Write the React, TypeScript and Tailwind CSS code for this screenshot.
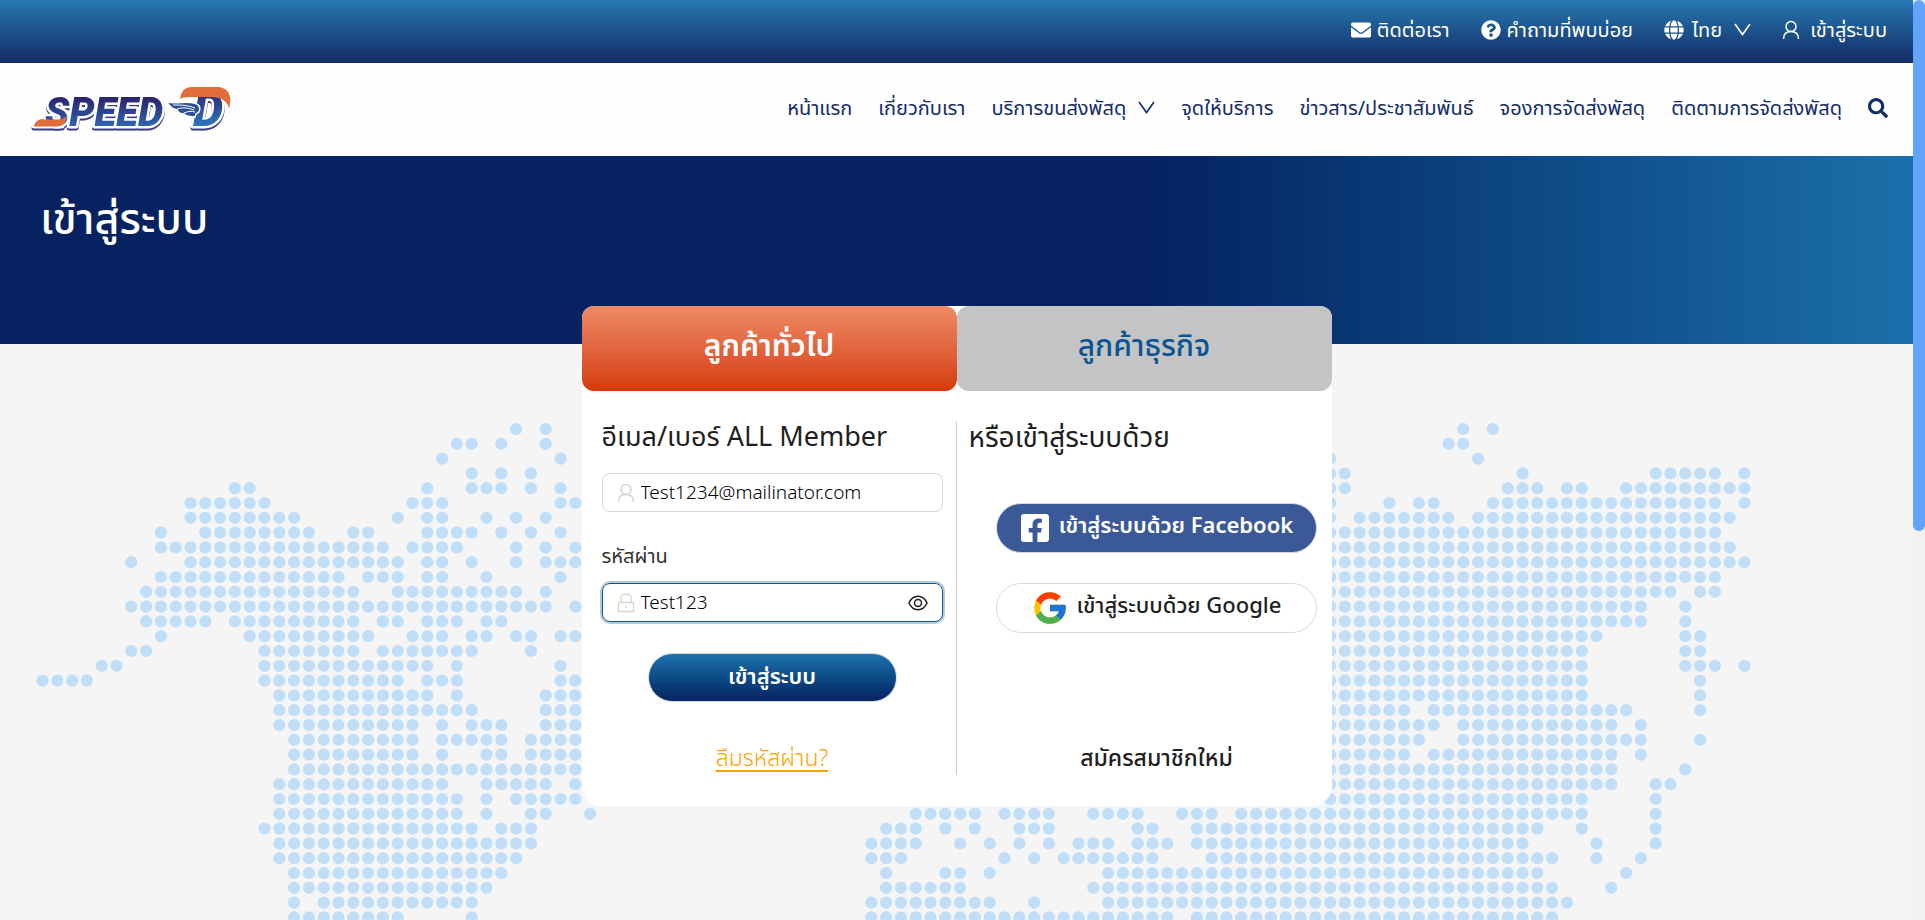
import { useState, type ReactNode } from "react";
import { FaEnvelope, FaFacebookSquare, FaGlobe, FaQuestionCircle, FaSearch } from "react-icons/fa";
import { FcGoogle } from "react-icons/fc";

// Each string is one row of the dotted world map: dot columns, single or as ranges.
const MAP_ROWS = [
  "32 34 96 98",
  "28 29 31 34 95 96",
  "27 35 87 97",
  "29 31 33 87-88 100 109-113 115",
  "13-14 26 29-31 33 35 87-88 99-101 103-104 107-115",
  "10-15 25-27 35-36 87 91 93-94 98-113 115",
  "10-17 24 26-27 30 32 34 87 89-95 97-114",
  "8 11-18 21-22 26-29 31 33 35 87-113",
  "8-23 25-28 32 34 36 87-114",
  "6 10-24 26-27 29 32 34-36 87-115",
  "8-20 22-24 26-27 30 35 87-113",
  "7-21 24-32 34 87-110 112-113",
  "6-34 36 87-108 111",
  "7-11 13-21 23-24 26-28 30-31 87-108 111",
  "8 14-22 25-27 29-30 32-33 35-36 87-105 111-112",
  "6-7 15-21 23-29 33 87-104 111-112",
  "4-5 15-26 28 35 87-104 111-113 115",
  "0-3 15-24 26-28 35-36 87-104 112",
  "16-26 28 34-36 87-104 112",
  "16-29 34-36 87-92 94-107 112",
  "16-25 27 29-31 34-36 87-94 96-106 108",
  "17-25 27-31 33-36 87-93 96-108 112",
  "17-25 27 30-31 33-36 87-92 94-106 108",
  "17-36 87-106 111",
  "16-27 30-34 36 87-106 109-110",
  "16-28 30 32-36 87-104 109",
  "16-28 30 33-34 37 59-63 65-68 71-74 77-79 81-104 109",
  "15-29 31-33 57-59 61 63 66-68 74-75 78-101 104 109",
  "16-33 56-59 62 64 66 68 70-72 74-76 78-100 105 109",
  "16-32 56-58 65 67 69-75 79-102 105 108",
  "17-31 57 61-62 64 72-101 107",
  "17-30 57-62 71-102 106",
  "17 19-29 56-64 67 72-103",
  "17-24 29 56-76 78-102",
];

const DOTS = MAP_ROWS.flatMap((row, r) =>
  row.split(" ").flatMap((part) => {
    const [from, to = from] = part.split("-").map(Number);
    return Array.from({ length: to - from + 1 }, (_, i) => ({
      x: 42.5 + (from + i) * 14.8,
      y: 85 + r * 14.8,
    }));
  }),
);

function WorldMap() {
  return (
    <svg viewBox="0 0 1913 576" className="absolute inset-x-0 top-0 w-full" fill="#c0def8" aria-hidden="true">
      {DOTS.map((d) => (
        <circle key={`${d.x}-${d.y}`} cx={d.x} cy={d.y} r="6.1" />
      ))}
    </svg>
  );
}

function Logo() {
  return (
    <svg viewBox="0 0 220 65" className="h-[65px] w-[220px] overflow-visible" role="img" aria-label="SPEED-D">
      <defs>
        <linearGradient id="ink" x1="0" y1="0" x2="0" y2="1">
          <stop offset="0.2" stopColor="#2b2470" />
          <stop offset="0.85" stopColor="#2f6db4" />
        </linearGradient>
        <linearGradient id="inkD" gradientUnits="userSpaceOnUse" x1="0" y1="20" x2="0" y2="52">
          <stop offset="0" stopColor="#2b2f7a" />
          <stop offset="1" stopColor="#2f78be" />
        </linearGradient>
      </defs>
      <g
        className="drop-shadow-[0_2px_0_#3b3a86]"
        fontFamily="Roboto"
        fontWeight="900"
        fontStyle="italic"
        strokeLinejoin="round"
        stroke="#fff"
        strokeWidth="5"
        paintOrder="stroke"
      >
        <path d="M14 51l2-3c2-3 4-4 8-4h18v7Z" fill="#e26b3c" />
        <text x="25" y="51" fontSize="40" fill="url(#ink)">
          SPEED
        </text>
        <text x="173" y="51" fontSize="48" fill="url(#inkD)">
          D
        </text>
      </g>
      <path d="M14 51.500c1-5 4-7 8-7h14c6 0 8-1 11-4-1 8-5 11-11 11Z" fill="#e26b3c" />
      <path
        d="M160 24c1-8 5-12 12-12h24c12 0 17 8 13 22-1-7-7-12-17-12h-19c-6 0-9 0-13 2Z"
        fill="#e26b3c"
      />
      <path
        d="M147 27c9 2 19-1 27 1 5 1 7 4 5 9l-3 2-1 3c-6 0-9-1-11-3-4 0-6-2-7-4-4-1-8-4-10-8Z"
        fill="#2d4f97"
        stroke="#fff"
        strokeWidth="1.5"
      />
      <path d="M153 30c8 0 14 0 22 3M157 34c7-2 11-1 17 1M164 38c5-2 7-2 11-1" fill="none" stroke="#fff" strokeWidth="1" />
    </svg>
  );
}

function ChevronDown() {
  return (
    <svg viewBox="0 0 17 13" className="h-[13px] w-[17px]" fill="none" stroke="currentColor" strokeWidth="1.6" aria-hidden="true">
      <path d="M1 1l7.500 10.500L16 1" />
    </svg>
  );
}

function UserIcon() {
  return (
    <svg viewBox="0 0 18 20" className="h-5 w-[18px]" fill="none" stroke="currentColor" strokeWidth="1.5" aria-hidden="true">
      <circle cx="9" cy="6.500" r="5" />
      <path d="M1.500 19c0-5 3-7.500 7.500-7.500s7.500 2.500 7.500 7.500" />
    </svg>
  );
}

function LockIcon() {
  return (
    <svg viewBox="0 0 18 20" className="h-5 w-[18px]" fill="none" stroke="currentColor" strokeWidth="1.3" aria-hidden="true">
      <path d="M1.500 9.500h15v9h-15zM4 9.500V4.500a3 3 0 0 1 3-3h4a3 3 0 0 1 3 3v5M9 12.500v3" />
    </svg>
  );
}

function EyeIcon() {
  return (
    <svg viewBox="0 0 20 16" className="h-4 w-5" fill="none" stroke="currentColor" strokeWidth="1.5" aria-hidden="true">
      <path d="M1 8c2-4.500 5-6.700 9-6.700S17 3.500 19 8c-2 4.500-5 6.700-9 6.700S3 12.500 1 8Z" />
      <circle cx="10" cy="8" r="3.500" />
    </svg>
  );
}

function TopLink({ children }: { children: ReactNode }) {
  return (
    <a href="#" className="flex items-center gap-1.5">
      {children}
    </a>
  );
}

const NAV = [
  { label: "หน้าแรก" },
  { label: "เกี่ยวกับเรา" },
  { label: "บริการขนส่งพัสดุ", menu: true },
  { label: "จุดให้บริการ" },
  { label: "ข่าวสาร/ประชาสัมพันธ์" },
  { label: "จองการจัดส่งพัสดุ" },
  { label: "ติดตามการจัดส่งพัสดุ" },
];

export default function App() {
  const [user, setUser] = useState("Test1234@mailinator.com");
  const [password, setPassword] = useState("Test123");
  const [visible, setVisible] = useState(true);

  return (
    <div className="flex h-screen overflow-hidden bg-[#f5f5f5] font-['Noto_Sans','Noto_Sans_Thai',sans-serif] text-[#1f1f1f]">
      <div className="flex min-w-0 flex-1 flex-col">
        <div className="flex h-[63px] shrink-0 items-center justify-end gap-[31px] bg-linear-to-b from-[#2779b1] to-[#142c66] pr-[26px] pb-1 text-xl text-white">
          <TopLink>
            <FaEnvelope className="size-5" />
            ติดต่อเรา
          </TopLink>
          <TopLink>
            <FaQuestionCircle className="size-5" />
            คำถามที่พบบ่อย
          </TopLink>
          <button type="button" className="flex items-center gap-2">
            <FaGlobe className="size-5" />
            <span className="pr-1">ไทย</span>
            <ChevronDown />
          </button>
          <a href="#" className="flex items-center gap-2.5">
            <UserIcon />
            เข้าสู่ระบบ
          </a>
        </div>

        <header className="flex h-[93px] shrink-0 items-center justify-between bg-[#fefefe] pr-[25px] pb-1 pl-5">
          <a href="#">
            <Logo />
          </a>
          <nav className="flex items-center gap-[26px] text-xl text-[#142c66]">
            {NAV.map((item) => (
              <a key={item.label} href="#" className="flex items-center gap-3 whitespace-nowrap">
                {item.label}
                {item.menu && <ChevronDown />}
              </a>
            ))}
            <button type="button" aria-label="ค้นหา">
              <FaSearch className="size-5" />
            </button>
          </nav>
        </header>

        <div className="h-[188px] shrink-0 bg-linear-to-r from-[#062260] from-60% to-[#1c70ab] px-10 pt-8">
          <h1 className="text-[43px] leading-[60px] font-medium text-white">เข้าสู่ระบบ</h1>
        </div>

        <main className="relative min-h-0 flex-1">
          <WorldMap />
          <div className="relative mx-auto -mt-[38px] w-full max-w-[750px] rounded-t-xl rounded-b-[20px] bg-white">
            <div className="grid grid-cols-2 text-[30px]" role="tablist">
              <button
                type="button"
                role="tab"
                aria-selected="true"
                className="h-[85px] rounded-xl bg-linear-to-b from-[#ed8a65] to-[#d43900] pb-2 font-semibold text-white"
              >
                ลูกค้าทั่วไป
              </button>
              <button type="button" role="tab" aria-selected="false" className="h-[85px] rounded-xl bg-[#c4c4c4] pb-2 font-medium text-[#0a5594]">
                ลูกค้าธุรกิจ
              </button>
            </div>

            <div className="grid grid-cols-2 pt-[30px] pb-[31px]">
              <form className="flex h-[354px] flex-col border-r border-[#ccc] pr-[13px] pl-5" onSubmit={(e) => e.preventDefault()}>
                <label htmlFor="user" className="text-[27px] leading-[30px]">
                  อีเมล/เบอร์ ALL Member
                </label>
                <div className="mt-[22px] flex h-[39px] shrink-0 items-center gap-1.5 rounded-lg border border-[#d9d9d9] px-3.5">
                  <span className="text-[#d3d5dd]">
                    <UserIcon />
                  </span>
                  <input
                    id="user"
                    value={user}
                    onChange={(e) => setUser(e.target.value)}
                    className="min-w-0 flex-1 bg-transparent text-[19px] font-light text-black outline-none"
                  />
                </div>
                <label htmlFor="password" className="mt-[30px] text-xl leading-7 text-[#333]">
                  รหัสผ่าน
                </label>
                <div className="mt-[13px] flex h-[39px] shrink-0 items-center gap-1.5 rounded-lg border border-[#0a5594] px-3.5 ring-2 ring-[#b9c9d1]">
                  <span className="text-[#d3d5dd]">
                    <LockIcon />
                  </span>
                  <input
                    id="password"
                    type={visible ? "text" : "password"}
                    value={password}
                    onChange={(e) => setPassword(e.target.value)}
                    className="min-w-0 flex-1 bg-transparent text-[19px] font-light text-black outline-none"
                  />
                  <button type="button" aria-label="แสดงรหัสผ่าน" onClick={() => setVisible(!visible)}>
                    <EyeIcon />
                  </button>
                </div>
                <button
                  type="submit"
                  className="mx-auto mt-[31px] h-[49px] w-[249px] shrink-0 rounded-full border border-[#d9d9d9] bg-linear-to-b from-[#1c74ae] to-[#062260] bg-origin-border pb-1 text-[22px] font-semibold text-white"
                >
                  เข้าสู่ระบบ
                </button>
                <a
                  href="#"
                  className="mt-auto mb-1 self-center text-[23px] leading-7 font-light text-[#ffa200] underline decoration-2 underline-offset-4"
                >
                  ลืมรหัสผ่าน?
                </a>
              </form>

              <section className="flex h-[354px] flex-col pr-[15px] pl-3">
                <h2 className="text-[28px] leading-[30px]">หรือเข้าสู่ระบบด้วย</h2>
                <div className="mt-[52px] flex flex-col gap-[30px] pl-[27px]">
                  <button
                    type="button"
                    className="flex h-[50px] items-center justify-center gap-2 rounded-full border border-[#d9d9d9] bg-[#3b5998] text-[22px] font-semibold text-white"
                  >
                    <FaFacebookSquare className="size-8" />
                    <span className="pb-2">เข้าสู่ระบบด้วย Facebook</span>
                  </button>
                  <button
                    type="button"
                    className="flex h-[50px] items-center justify-center gap-2 rounded-full border border-[#d9d9d9] bg-white text-[22px] font-medium"
                  >
                    <FcGoogle className="size-[38px]" />
                    <span className="pb-2">เข้าสู่ระบบด้วย Google</span>
                  </button>
                </div>
                <a href="#" className="mt-auto mb-1 self-center pl-7 text-[23px] leading-7 font-medium">
                  สมัครสมาชิกใหม่
                </a>
              </section>
            </div>
          </div>
        </main>
      </div>

      <div className="w-3 shrink-0 bg-[#f1f1f1]" aria-hidden="true">
        <div className="h-[531px] rounded-full bg-[#62a4fb]" />
      </div>
    </div>
  );
}
